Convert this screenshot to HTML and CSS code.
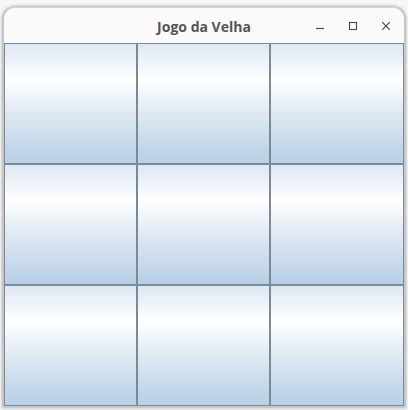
FILE: index.html
```html
<!DOCTYPE html>
<html lang="pt">
<head>
<meta charset="utf-8">
<title>Jogo da Velha</title>
<link rel="stylesheet" href="styles.css">
</head>
<body>
<div class="desktop">
  <div class="window">
    <div class="titlebar">
      <div class="spacer"></div>
      <div class="title">Jogo da Velha</div>
      <div class="controls">
        <span class="ctl">
          <svg width="10" height="10" viewBox="0 0 10 10"><path d="M1 7.5H9" stroke="#4a4a4a" stroke-width="1.2" fill="none"/></svg>
        </span>
        <span class="ctl">
          <svg width="10" height="10" viewBox="0 0 10 10"><rect x="1.5" y="1.5" width="7" height="7" stroke="#4a4a4a" stroke-width="1.1" fill="none"/></svg>
        </span>
        <span class="ctl">
          <svg width="10" height="10" viewBox="0 0 10 10"><path d="M1.2 1.2L8.8 8.8M8.8 1.2L1.2 8.8" stroke="#4a4a4a" stroke-width="1.2" fill="none"/></svg>
        </span>
      </div>
    </div>
    <div class="board">
      <button class="cell"></button>
      <button class="cell"></button>
      <button class="cell"></button>
      <button class="cell"></button>
      <button class="cell"></button>
      <button class="cell"></button>
      <button class="cell"></button>
      <button class="cell"></button>
      <button class="cell"></button>
    </div>
  </div>
</div>
</body>
</html>
```
FILE: styles.css
```css
html, body {
  margin: 0;
  padding: 0;
  background: #ffffff;
}
.desktop {
  width: 408px;
  height: 410px;
  overflow: hidden;
  background: #f7f7f7;
  padding-top: 7px;
  padding-left: 3px;
  box-sizing: border-box;
}
.window {
  width: 402px;
  height: 400px;
  box-sizing: border-box;
  border: 1px solid #c6c6c6;
  border-top-color: #d8d8d8;
  border-radius: 12px 12px 0 0;
  background: #fafafa;
  box-shadow: 0 0 3px 1px rgba(0,0,0,0.3);
  display: flex;
  flex-direction: column;
}
.titlebar {
  height: 35px;
  display: grid;
  grid-template-columns: 1fr auto 1fr;
  align-items: center;
  background: #fafafa;
  border-radius: 12px 12px 0 0;
}
.title {
  font-family: "Open Sans", "DejaVu Sans", sans-serif;
  font-weight: 700;
  font-size: 14px;
  color: #545454;
  padding-top: 1px;
}
.controls {
  display: flex;
  justify-content: flex-end;
  padding-right: 2px;
}
.ctl {
  width: 33px;
  height: 24px;
  display: flex;
  align-items: center;
  justify-content: center;
}
.ctl svg {
  display: block;
}
.board {
  flex: 1;
  display: grid;
  grid-template-columns: 133px 133px 134px;
  grid-template-rows: 121px 121px 121px;
  background: #7a8a99;
}
.cell {
  margin: 0;
  padding: 0;
  border: 1px solid #7a8a99;
  background: linear-gradient(to bottom, #dde8f3 0%, #ffffff 30%, #dde8f3 60%, #b8cfe5 100%);
  outline: none;
}
```
